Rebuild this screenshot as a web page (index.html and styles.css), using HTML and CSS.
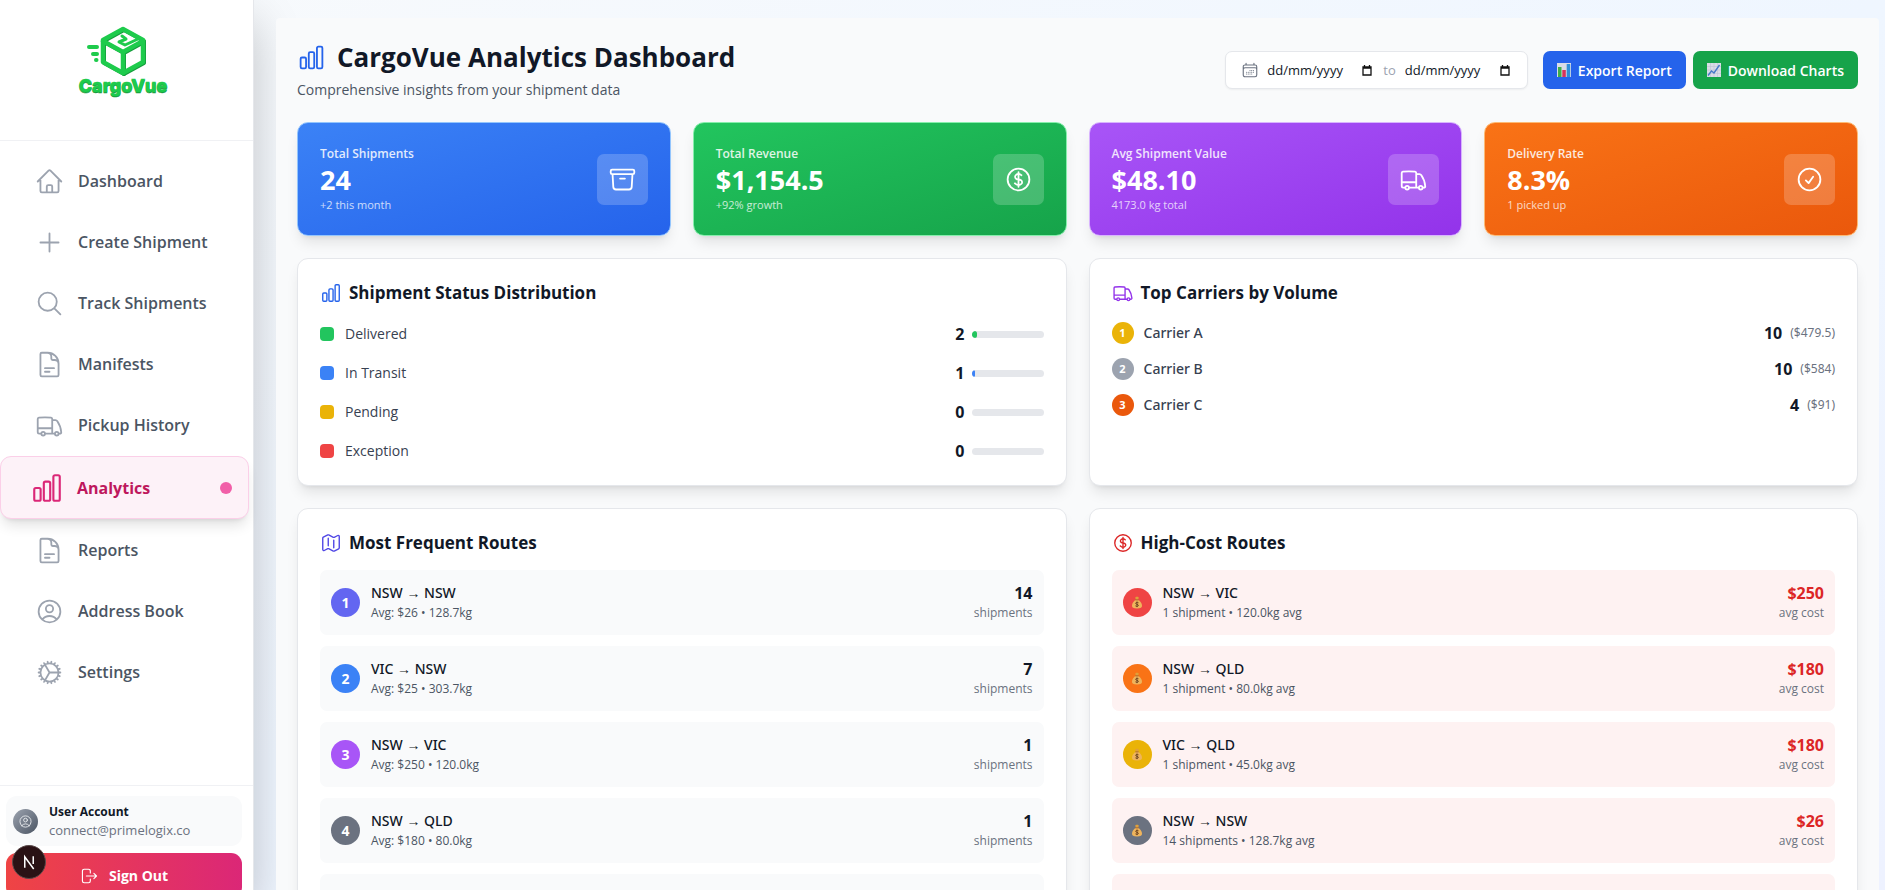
FILE: index.html
```
<!DOCTYPE html>
<html lang="en">
<head>
    <meta charset="UTF-8">
    <meta name="viewport" content="width=device-width, initial-scale=1.0">
    <title>CargoVue Analytics Dashboard</title>
    <link rel="stylesheet" href="styles.css">
</head>
<body>
    <!-- Icon set -->
    <svg class="sprite" aria-hidden="true">
        <symbol id="home" viewBox="0 0 24 24"><path d="m2.25 12 8.954-8.955c.44-.439 1.152-.439 1.591 0L21.75 12M4.5 9.75v10.125c0 .621.504 1.125 1.125 1.125H9.75v-4.875c0-.621.504-1.125 1.125-1.125h2.25c.621 0 1.125.504 1.125 1.125V21h4.125c.621 0 1.125-.504 1.125-1.125V9.75M8.25 21h8.25"/></symbol>
        <symbol id="plus" viewBox="0 0 24 24"><path d="M12 4.5v15m7.5-7.5h-15"/></symbol>
        <symbol id="search" viewBox="0 0 24 24"><path d="m21 21-5.197-5.197m0 0A7.5 7.5 0 1 0 5.196 5.196a7.5 7.5 0 0 0 10.607 10.607Z"/></symbol>
        <symbol id="document" viewBox="0 0 24 24"><path d="M19.5 14.25v-2.625a3.375 3.375 0 0 0-3.375-3.375h-1.5A1.125 1.125 0 0 1 13.5 7.125v-1.5a3.375 3.375 0 0 0-3.375-3.375H8.25m0 12.75h7.5m-7.5 3H12M10.5 2.25H5.625c-.621 0-1.125.504-1.125 1.125v17.25c0 .621.504 1.125 1.125 1.125h12.75c.621 0 1.125-.504 1.125-1.125V11.25a9 9 0 0 0-9-9Z"/></symbol>
        <symbol id="truck" viewBox="0 0 24 24"><path d="M8.25 18.75a1.5 1.5 0 0 1-3 0m3 0a1.5 1.5 0 0 0-3 0m3 0h6m-9 0H3.375a1.125 1.125 0 0 1-1.125-1.125V14.25m17.25 4.5a1.5 1.5 0 0 1-3 0m3 0a1.5 1.5 0 0 0-3 0m3 0h1.125c.621 0 1.129-.504 1.09-1.124a17.902 17.902 0 0 0-3.213-9.193 2.056 2.056 0 0 0-1.58-.86H14.25M16.5 18.75h-2.25m0-11.177v-.958c0-.568-.422-1.048-.987-1.106a48.554 48.554 0 0 0-10.026 0 1.106 1.106 0 0 0-.987 1.106v7.635m12-6.677v6.677m0 4.5v-4.5m0 0h-12"/></symbol>
        <symbol id="chart" viewBox="0 0 24 24"><path d="M3 13.125C3 12.504 3.504 12 4.125 12h2.25c.621 0 1.125.504 1.125 1.125v6.75C7.5 20.496 6.996 21 6.375 21h-2.25A1.125 1.125 0 0 1 3 19.875v-6.75ZM9.75 8.625c0-.621.504-1.125 1.125-1.125h2.25c.621 0 1.125.504 1.125 1.125v11.25c0 .621-.504 1.125-1.125 1.125h-2.25a1.125 1.125 0 0 1-1.125-1.125V8.625ZM16.5 4.125c0-.621.504-1.125 1.125-1.125h2.25C20.496 3 21 3.504 21 4.125v15.75c0 .621-.504 1.125-1.125 1.125h-2.25a1.125 1.125 0 0 1-1.125-1.125V4.125Z"/></symbol>
        <symbol id="user" viewBox="0 0 24 24"><path d="M17.982 18.725A7.488 7.488 0 0 0 12 15.75a7.488 7.488 0 0 0-5.982 2.975m11.963 0a9 9 0 1 0-11.963 0m11.963 0A8.966 8.966 0 0 1 12 21a8.966 8.966 0 0 1-5.982-2.275M15 9.75a3 3 0 1 1-6 0 3 3 0 0 1 6 0Z"/></symbol>
        <symbol id="cog" viewBox="0 0 24 24"><path d="M4.5 12a7.5 7.5 0 0 0 15 0m-15 0a7.5 7.5 0 1 1 15 0m-15 0H3m16.5 0H21m-1.5 0H12m-8.457 3.077 1.41-.513m14.095-5.13 1.41-.513M5.106 17.785l1.15-.964m11.49-9.642 1.149-.964M7.501 19.795l.75-1.3m7.5-12.99.75-1.3m-6.063 16.658.26-1.477m2.605-14.772.26-1.477m0 17.726-.26-1.477M10.698 4.614l-.26-1.477M16.5 19.794l-.75-1.299M7.5 4.205 12 12m6.894 5.785-1.149-.964M6.256 7.178l-1.15-.964m15.352 8.864-1.41-.513M4.954 9.435l-1.41-.514M12.002 12l-3.75 6.495"/></symbol>
        <symbol id="calendar" viewBox="0 0 24 24"><path d="M6.75 3v2.25M17.25 3v2.25M3 18.75V7.5a2.25 2.25 0 0 1 2.25-2.25h13.5A2.25 2.25 0 0 1 21 7.5v11.25m-18 0A2.25 2.25 0 0 0 5.25 21h13.5A2.25 2.25 0 0 0 21 18.75m-18 0v-7.5A2.25 2.25 0 0 1 5.25 9h13.5A2.25 2.25 0 0 1 21 11.25v7.5m-9-6h.008v.008H12v-.008ZM12 15h.008v.008H12V15Zm0 2.25h.008v.008H12v-.008ZM9.75 15h.008v.008H9.75V15Zm0 2.25h.008v.008H9.75v-.008ZM7.5 15h.008v.008H7.5V15Zm0 2.25h.008v.008H7.5v-.008Zm6.75-4.5h.008v.008h-.008v-.008Zm0 2.25h.008v.008h-.008V15Zm0 2.25h.008v.008h-.008v-.008Zm2.25-4.5h.008v.008H16.5v-.008Zm0 2.25h.008v.008H16.5V15Z"/></symbol>
        <symbol id="archive" viewBox="0 0 24 24"><path d="m20.25 7.5-.625 10.632a2.25 2.25 0 0 1-2.247 2.118H6.622a2.25 2.25 0 0 1-2.247-2.118L3.75 7.5M10 11.25h4M3.375 7.5h17.25c.621 0 1.125-.504 1.125-1.125v-1.5c0-.621-.504-1.125-1.125-1.125H3.375c-.621 0-1.125.504-1.125 1.125v1.5c0 .621.504 1.125 1.125 1.125Z"/></symbol>
        <symbol id="dollar" viewBox="0 0 24 24"><path d="M12 6v12m-3-2.818.879.659c1.171.879 3.07.879 4.242 0 1.172-.879 1.172-2.303 0-3.182C13.536 12.219 12.768 12 12 12c-.725 0-1.45-.22-2.003-.659-1.106-.879-1.106-2.303 0-3.182s2.9-.879 4.006 0l.415.33M21 12a9 9 0 1 1-18 0 9 9 0 0 1 18 0Z"/></symbol>
        <symbol id="check" viewBox="0 0 24 24"><path d="M9 12.75 11.25 15 15 9.75M21 12a9 9 0 1 1-18 0 9 9 0 0 1 18 0Z"/></symbol>
        <symbol id="map" viewBox="0 0 24 24"><path d="M9 6.75V15m6-6v8.25m.503 3.498 4.875-2.437c.381-.19.622-.58.622-1.006V4.82c0-.836-.88-1.38-1.628-1.006l-3.869 1.934c-.317.159-.69.159-1.006 0L9.503 3.252a1.125 1.125 0 0 0-1.006 0L3.622 5.689C3.24 5.88 3 6.27 3 6.695V19.18c0 .836.88 1.38 1.628 1.006l3.869-1.934c.317-.159.69-.159 1.006 0l4.994 2.497c.317.158.69.158 1.006 0Z"/></symbol>
        <symbol id="logout" viewBox="0 0 24 24"><path d="M13.750 8V5.250A2.250 2.250 0 0 0 11.500 3h-6a2.250 2.250 0 0 0-2.250 2.250v13.500A2.250 2.250 0 0 0 5.500 21h6a2.250 2.250 0 0 0 2.250-2.250V16M18.500 15.500 22 12l-3.500-3.500M22 12H8.500"/></symbol>
        <symbol id="picker" viewBox="0 0 10 11"><path d="M1 3h8M1 2h8v8H1zM2.500 0v2M7.500 0v2" fill="none" stroke="#111" stroke-width="1.300"/></symbol>
        <symbol id="bars" viewBox="0 0 14 14">
            <rect width="14" height="14" fill="#d8dce6"/>
            <rect x="1" y="4" width="3.500" height="10" fill="#3fae49"/>
            <rect x="5.300" y="7" width="3.500" height="7" fill="#d6335c"/>
            <rect x="9.700" y="1" width="3.500" height="13" fill="#2f8fd8"/>
        </symbol>
        <symbol id="trend" viewBox="0 0 14 14">
            <rect width="14" height="14" fill="#d8dce6"/>
            <path d="M0 3.500h14M0 7h14M0 10.500h14M3.500 0v14M7 0v14M10.500 0v14" stroke="#b9bfd0" stroke-width=".5"/>
            <path d="M1 12.500 4.500 8l2.500 2 5.500-8" fill="none" stroke="#4478c8" stroke-width="1.400"/>
        </symbol>
        <symbol id="bag" viewBox="0 0 12 14">
            <path d="M4 1.500 6 .5l2 1L7.200 4H4.800z" fill="#e0a03a"/>
            <path d="M4.600 4h2.800c2.300 1.500 4 4 4 6.500 0 2-1.400 3-5.400 3s-5.400-1-5.400-3C.6 8 2.300 5.500 4.600 4z" fill="#efb45c"/>
            <path d="M4.200 4.200h3.600" stroke="#a5602a" stroke-width="1"/>
            <path d="M7.600 7.300C6.500 6.600 4.500 6.700 4.600 8c.1 1.200 2.900.8 2.900 2 0 1.400-2.200 1.400-3.200.6M6 6v6" fill="none" stroke="#69401f" stroke-width="1"/>
        </symbol>
    </svg>

    <div class="app">
        <aside class="sidebar">
            <div class="brand">
                <svg class="logo" viewBox="0 0 92 76" role="img" aria-label="CargoVue">
                    <g fill="none" stroke="#159a3c" stroke-linejoin="round" stroke-linecap="round" stroke-width="4" transform="translate(1 1)">
                        <path d="M45 5 65 16v22L45 49 25 38V16Z"/>
                        <path d="m25 17 20 11 20-11M45 28v21"/>
                    </g>
                    <g fill="none" stroke="#1ecb4c" stroke-linejoin="round" stroke-linecap="round">
                        <path d="M45 5 65 16v22L45 49 25 38V16Z" stroke-width="4.500"/>
                        <path d="m25 17 20 11 20-11M45 28v21" stroke-width="4.500"/>
                        <path d="m60 15-13 6-6-3 7-3-4-3" stroke-width="3"/>
                        <path d="M11 23h8M15 30h4M18 36h.5" stroke-width="4"/>
                    </g>
                    <text x="45" y="69" class="logo-shade">CargoVue</text>
                    <text x="45" y="68" class="logo-text">CargoVue</text>
                </svg>
            </div>

            <nav class="nav">
                <a href="#" class="nav-link"><svg class="icon"><use href="#home"/></svg>Dashboard</a>
                <a href="#" class="nav-link"><svg class="icon"><use href="#plus"/></svg>Create Shipment</a>
                <a href="#" class="nav-link"><svg class="icon"><use href="#search"/></svg>Track Shipments</a>
                <a href="#" class="nav-link"><svg class="icon"><use href="#document"/></svg>Manifests</a>
                <a href="#" class="nav-link"><svg class="icon"><use href="#truck"/></svg>Pickup History</a>
                <a href="#" class="nav-link active"><svg class="icon"><use href="#chart"/></svg>Analytics<span class="dot"></span></a>
                <a href="#" class="nav-link"><svg class="icon"><use href="#document"/></svg>Reports</a>
                <a href="#" class="nav-link"><svg class="icon"><use href="#user"/></svg>Address Book</a>
                <a href="#" class="nav-link"><svg class="icon"><use href="#cog"/></svg>Settings</a>
            </nav>

            <div class="account">
                <div class="user-card">
                    <span class="avatar"><svg class="icon"><use href="#user"/></svg></span>
                    <div class="user-info">
                        <p class="user-name">User Account</p>
                        <p class="user-mail">connect@primelogix.co</p>
                    </div>
                </div>
                <button type="button" class="sign-out"><svg class="icon"><use href="#logout"/></svg>Sign Out</button>
                <button type="button" class="dev-badge" aria-label="Dev tools">
                    <svg viewBox="0 0 34 34"><path d="M12.500 23V11.500L22 24.500M21.500 11v8" fill="none" stroke="#fff" stroke-width="1.600"/></svg>
                </button>
            </div>
        </aside>

        <main class="main">
            <div class="content">
                <header class="page-header">
                    <div>
                        <h1 class="page-title"><svg class="icon"><use href="#chart"/></svg>CargoVue Analytics Dashboard</h1>
                        <p class="subtitle">Comprehensive insights from your shipment data</p>
                    </div>
                    <div class="actions">
                        <div class="date-range">
                            <svg class="icon"><use href="#calendar"/></svg>
                            <input type="text" class="date-input" placeholder="dd/mm/yyyy" aria-label="Start date">
                            <svg class="picker"><use href="#picker"/></svg>
                            <span class="to">to</span>
                            <input type="text" class="date-input" placeholder="dd/mm/yyyy" aria-label="End date">
                            <svg class="picker"><use href="#picker"/></svg>
                        </div>
                        <div class="buttons">
                            <button type="button" class="btn btn-blue"><svg class="emoji"><use href="#bars"/></svg>Export Report</button>
                            <button type="button" class="btn btn-green"><svg class="emoji"><use href="#trend"/></svg>Download Charts</button>
                        </div>
                    </div>
                </header>

                <!-- Key metrics -->
                <section class="stats">
                    <div class="stat blue">
                        <div>
                            <p class="stat-label">Total Shipments</p>
                            <p class="stat-value">24</p>
                            <p class="stat-note">+2 this month</p>
                        </div>
                        <span class="stat-icon"><svg class="icon"><use href="#archive"/></svg></span>
                    </div>
                    <div class="stat green">
                        <div>
                            <p class="stat-label">Total Revenue</p>
                            <p class="stat-value">$1,154.5</p>
                            <p class="stat-note">+92% growth</p>
                        </div>
                        <span class="stat-icon"><svg class="icon"><use href="#dollar"/></svg></span>
                    </div>
                    <div class="stat purple">
                        <div>
                            <p class="stat-label">Avg Shipment Value</p>
                            <p class="stat-value">$48.10</p>
                            <p class="stat-note">4173.0 kg total</p>
                        </div>
                        <span class="stat-icon"><svg class="icon"><use href="#truck"/></svg></span>
                    </div>
                    <div class="stat orange">
                        <div>
                            <p class="stat-label">Delivery Rate</p>
                            <p class="stat-value">8.3%</p>
                            <p class="stat-note">1 picked up</p>
                        </div>
                        <span class="stat-icon"><svg class="icon"><use href="#check"/></svg></span>
                    </div>
                </section>

                <section class="panels">
                    <div class="panel">
                        <h2 class="panel-title"><svg class="icon c-blue"><use href="#chart"/></svg>Shipment Status Distribution</h2>
                        <ul class="status-list">
                            <li class="status"><span class="swatch bg-green"></span>Delivered<b class="count">2</b><span class="track"><span class="fill bg-green" style="width: 8.3%"></span></span></li>
                            <li class="status"><span class="swatch bg-blue"></span>In Transit<b class="count">1</b><span class="track"><span class="fill bg-blue" style="width: 4.2%"></span></span></li>
                            <li class="status"><span class="swatch bg-yellow"></span>Pending<b class="count">0</b><span class="track"></span></li>
                            <li class="status"><span class="swatch bg-red"></span>Exception<b class="count">0</b><span class="track"></span></li>
                        </ul>
                    </div>

                    <div class="panel">
                        <h2 class="panel-title"><svg class="icon c-purple"><use href="#truck"/></svg>Top Carriers by Volume</h2>
                        <ul class="carrier-list">
                            <li class="carrier"><span class="rank bg-yellow">1</span>Carrier A<b class="count">10</b><span class="cost">($479.5)</span></li>
                            <li class="carrier"><span class="rank bg-gray">2</span>Carrier B<b class="count">10</b><span class="cost">($584)</span></li>
                            <li class="carrier"><span class="rank bg-rust">3</span>Carrier C<b class="count">4</b><span class="cost">($91)</span></li>
                        </ul>
                    </div>

                    <div class="panel">
                        <h2 class="panel-title"><svg class="icon c-indigo"><use href="#map"/></svg>Most Frequent Routes</h2>
                        <ul class="route-list">
                            <li class="route">
                                <span class="badge bg-indigo">1</span>
                                <div class="route-info"><p class="route-name">NSW → NSW</p><p class="route-note">Avg: $26 • 128.7kg</p></div>
                                <div class="route-total"><p class="amount">14</p><p class="unit">shipments</p></div>
                            </li>
                            <li class="route">
                                <span class="badge bg-blue">2</span>
                                <div class="route-info"><p class="route-name">VIC → NSW</p><p class="route-note">Avg: $25 • 303.7kg</p></div>
                                <div class="route-total"><p class="amount">7</p><p class="unit">shipments</p></div>
                            </li>
                            <li class="route">
                                <span class="badge bg-purple">3</span>
                                <div class="route-info"><p class="route-name">NSW → VIC</p><p class="route-note">Avg: $250 • 120.0kg</p></div>
                                <div class="route-total"><p class="amount">1</p><p class="unit">shipments</p></div>
                            </li>
                            <li class="route">
                                <span class="badge bg-slate">4</span>
                                <div class="route-info"><p class="route-name">NSW → QLD</p><p class="route-note">Avg: $180 • 80.0kg</p></div>
                                <div class="route-total"><p class="amount">1</p><p class="unit">shipments</p></div>
                            </li>
                            <li class="route"></li>
                        </ul>
                    </div>

                    <div class="panel">
                        <h2 class="panel-title"><svg class="icon c-red"><use href="#dollar"/></svg>High-Cost Routes</h2>
                        <ul class="route-list costly">
                            <li class="route">
                                <span class="badge bg-red"><svg class="bag"><use href="#bag"/></svg></span>
                                <div class="route-info"><p class="route-name">NSW → VIC</p><p class="route-note">1 shipment • 120.0kg avg</p></div>
                                <div class="route-total"><p class="amount">$250</p><p class="unit">avg cost</p></div>
                            </li>
                            <li class="route">
                                <span class="badge bg-orange"><svg class="bag"><use href="#bag"/></svg></span>
                                <div class="route-info"><p class="route-name">NSW → QLD</p><p class="route-note">1 shipment • 80.0kg avg</p></div>
                                <div class="route-total"><p class="amount">$180</p><p class="unit">avg cost</p></div>
                            </li>
                            <li class="route">
                                <span class="badge bg-yellow"><svg class="bag"><use href="#bag"/></svg></span>
                                <div class="route-info"><p class="route-name">VIC → QLD</p><p class="route-note">1 shipment • 45.0kg avg</p></div>
                                <div class="route-total"><p class="amount">$180</p><p class="unit">avg cost</p></div>
                            </li>
                            <li class="route">
                                <span class="badge bg-slate"><svg class="bag"><use href="#bag"/></svg></span>
                                <div class="route-info"><p class="route-name">NSW → NSW</p><p class="route-note">14 shipments • 128.7kg avg</p></div>
                                <div class="route-total"><p class="amount">$26</p><p class="unit">avg cost</p></div>
                            </li>
                            <li class="route"></li>
                        </ul>
                    </div>
                </section>
            </div>
        </main>
    </div>
</body>
</html>
```
FILE: styles.css
```
* {
    box-sizing: border-box;
}

body {
    margin: 0;
    font-family: "Open Sans", "Noto Sans", sans-serif;
    font-size: 14px;
    line-height: 20px;
    color: #111827;
}

h1, h2, p, ul {
    margin: 0;
    padding: 0;
}

ul {
    list-style: none;
}

button, input {
    font-family: inherit;
}

.sprite {
    display: none;
}

.icon {
    width: 22px;
    height: 22px;
    flex-shrink: 0;
    fill: none;
    stroke: currentColor;
    stroke-width: 1.5;
    stroke-linecap: round;
    stroke-linejoin: round;
}

.app {
    display: flex;
    height: 100vh;
    overflow: hidden;
    background: linear-gradient(to bottom right, #f8fafc, #eff6ff 50%, #eef2ff);
}

/* Sidebar */
.sidebar {
    display: flex;
    flex-direction: column;
    flex: 0 0 254px;
    background: #fff;
    border-right: 1px solid #e5e7eb;
    box-shadow: 0 22px 45px rgba(0, 0, 0, 0.22);
}

.brand {
    display: flex;
    justify-content: center;
    flex: 0 0 141px;
    padding: 24px 6px 0 0;
    border-bottom: 1px solid #f0f1f4;
}

.logo {
    width: 92px;
    height: 76px;
}

.logo-text, .logo-shade {
    font-family: Inter, sans-serif;
    font-size: 18px;
    font-weight: 800;
    text-anchor: middle;
    fill: #1ecb4c;
    stroke: #1ecb4c;
    stroke-width: 0.5;
}

.logo-shade {
    fill: #15983c;
    stroke: #15983c;
}

.nav {
    display: flex;
    flex-direction: column;
    flex: 1 0 auto;
    gap: 7px;
    padding: 13px 4px 86px 0;
}

.nav-link {
    display: flex;
    align-items: center;
    gap: 14px;
    height: 54px;
    padding: 0 16px 0 35px;
    border-radius: 11px;
    color: #4b5563;
    font-size: 16px;
    font-weight: 600;
    text-decoration: none;
}

.nav-link .icon {
    width: 29px;
    height: 29px;
    color: #9ca3af;
}

.nav-link.active {
    gap: 13px;
    height: 63px;
    margin: -3px 0;
    padding-left: 29px;
    background: #fdf2f8;
    border: 1px solid #fbcfe8;
    color: #be185d;
    font-weight: 700;
    box-shadow: 0 9px 14px -3px rgba(0, 0, 0, 0.12), 0 4px 5px -4px rgba(0, 0, 0, 0.12);
}

.nav-link.active .icon {
    width: 34px;
    height: 34px;
    color: #db2777;
}

.dot {
    width: 12px;
    height: 12px;
    margin-left: auto;
    border-radius: 50%;
    background: #f15fa8;
}

.account {
    position: relative;
    display: flex;
    flex-direction: column;
    flex-shrink: 0;
    gap: 7px;
    padding: 10px 11px 12px 6px;
    border-top: 1px solid #f0f1f4;
}

.user-card {
    display: flex;
    align-items: center;
    gap: 11px;
    height: 50px;
    padding: 0 7px;
    border-radius: 11px;
    background: #f9fafb;
}

.avatar {
    display: flex;
    align-items: center;
    justify-content: center;
    width: 25px;
    height: 25px;
    border-radius: 50%;
    background: linear-gradient(135deg, #9ca3af, #4b5563);
    color: #e5e7eb;
}

.avatar .icon {
    width: 15px;
    height: 15px;
}

.user-info {
    font-size: 13px;
    line-height: 18px;
}

.user-name {
    font-size: 12px;
    font-weight: 700;
}

.user-mail {
    color: #6b7280;
}

.sign-out {
    display: flex;
    align-items: center;
    justify-content: center;
    gap: 11px;
    height: 45px;
    border: 0;
    border-radius: 11px;
    background: linear-gradient(90deg, #ef4444, #db2777);
    color: #fff;
    font-size: 14px;
    font-weight: 700;
}

.sign-out .icon {
    width: 18px;
    height: 18px;
}

.dev-badge {
    position: absolute;
    top: 59px;
    left: 12px;
    width: 34px;
    height: 34px;
    padding: 0;
    border: 1px solid #5a4a4a;
    border-radius: 50%;
    background: #2a1215;
}

.dev-badge svg {
    display: block;
}

/* Main area */
.main {
    flex: 1;
    min-width: 0;
    padding: 18px 6px 0 22px;
}

.content {
    padding: 22px 21px;
    border-radius: 4px;
    background: #f9fafb;
}

.page-header {
    display: flex;
    align-items: center;
    justify-content: space-between;
    height: 60px;
    margin-bottom: 22px;
}

.page-title {
    display: flex;
    align-items: center;
    gap: 11px;
    font-size: 26px;
    line-height: 34px;
    font-weight: 700;
}

.page-title .icon {
    width: 29px;
    height: 29px;
    color: #2563eb;
}

.subtitle {
    margin-top: 6px;
    color: #4b5563;
}

.actions {
    display: flex;
    gap: 15px;
}

.buttons {
    display: flex;
    gap: 7px;
}

.date-range {
    display: flex;
    align-items: center;
    height: 38px;
    padding: 0 17px 0 15px;
    border: 1px solid #e5e7eb;
    border-radius: 7px;
    background: #fff;
    box-shadow: 0 1px 2px rgba(0, 0, 0, 0.05);
    color: #6b7280;
}

.date-range .icon {
    width: 18px;
    height: 18px;
    margin-right: 8px;
}

.date-input {
    width: 95px;
    padding: 0;
    border: 0;
    background: none;
    font-size: 13px;
    color: #111827;
}

.date-input::placeholder {
    color: #111827;
}

.picker {
    width: 10px;
    height: 11px;
}

.to {
    margin: 0 9px 0 11px;
    color: #9ca3af;
    font-size: 13px;
}

.btn {
    display: flex;
    align-items: center;
    gap: 7px;
    height: 38px;
    padding: 0 14px;
    border: 0;
    border-radius: 7px;
    color: #fff;
    font-size: 14px;
    font-weight: 600;
}

.btn-blue {
    background: #2563eb;
}

.btn-green {
    background: #16a34a;
}

.emoji {
    width: 14px;
    height: 14px;
}

/* Metric cards */
.stats {
    display: grid;
    grid-template-columns: repeat(4, 1fr);
    gap: 22px;
    margin-bottom: 22px;
}

.stat {
    display: flex;
    align-items: center;
    justify-content: space-between;
    height: 114px;
    padding: 0 22px;
    border: 1px solid;
    border-radius: 11px;
    color: #fff;
    box-shadow: 0 9px 14px -3px rgba(0, 0, 0, 0.1), 0 4px 5px -4px rgba(0, 0, 0, 0.1);
}

.stat-label {
    font-size: 12px;
    line-height: 18px;
    font-weight: 600;
    opacity: 0.85;
}

.stat-value {
    font-size: 27px;
    line-height: 34px;
    font-weight: 700;
}

.stat-note {
    font-size: 11px;
    line-height: 16px;
    opacity: 0.75;
}

.stat-icon {
    display: flex;
    padding: 11px;
    border-radius: 7px;
    background: rgba(255, 255, 255, 0.2);
}

.stat-icon .icon {
    width: 29px;
    height: 29px;
}

.blue {
    background: linear-gradient(to bottom right, #3b82f6, #2563eb);
    border-color: #93c5fd;
}

.green {
    background: linear-gradient(to bottom right, #22c55e, #16a34a);
    border-color: #86efac;
}

.purple {
    background: linear-gradient(to bottom right, #a855f7, #9333ea);
    border-color: #d8b4fe;
}

.orange {
    background: linear-gradient(to bottom right, #f97316, #ea580c);
    border-color: #fdba74;
}

/* Panels */
.panels {
    display: grid;
    grid-template-columns: repeat(2, 1fr);
    gap: 22px;
}

.panel {
    padding: 21px 22px 20px;
    border: 1px solid #e5e7eb;
    border-radius: 11px;
    background: #fff;
    box-shadow: 0 9px 14px -3px rgba(0, 0, 0, 0.1), 0 4px 5px -4px rgba(0, 0, 0, 0.1);
}

.panel-title {
    display: flex;
    align-items: center;
    gap: 7px;
    margin-bottom: 14px;
    font-size: 17px;
    line-height: 26px;
    font-weight: 700;
}

.status-list {
    display: grid;
    gap: 11px;
}

.status {
    display: flex;
    align-items: center;
    height: 28px;
    color: #374151;
}

.swatch {
    width: 14px;
    height: 14px;
    margin-right: 11px;
    border-radius: 4px;
}

.count {
    margin-left: auto;
    color: #111827;
    font-size: 16px;
}

.track {
    width: 72px;
    height: 7px;
    margin-left: 7px;
    border-radius: 4px;
    background: #e5e7eb;
    overflow: hidden;
}

.fill {
    display: block;
    height: 7px;
    border-radius: 4px;
}

.carrier-list {
    display: grid;
    gap: 11px;
}

.carrier {
    display: flex;
    align-items: center;
    height: 25px;
    color: #374151;
    font-family: "Noto Sans", sans-serif;
    font-weight: 500;
}

.rank {
    width: 22px;
    margin-right: 10px;
    border-radius: 50%;
    color: #fff;
    font-size: 11px;
    line-height: 22px;
    font-weight: 700;
    text-align: center;
}

.cost {
    margin-left: 8px;
    color: #6b7280;
    font-size: 12px;
    font-weight: 400;
}

.route-list {
    display: grid;
    gap: 11px;
}

.route {
    display: flex;
    align-items: center;
    gap: 11px;
    height: 65px;
    padding: 0 11px;
    border-radius: 7px;
    background: #f9fafb;
}

.costly .route {
    background: #fef2f2;
}

.badge {
    display: flex;
    align-items: center;
    justify-content: center;
    width: 29px;
    height: 29px;
    border-radius: 50%;
    color: #fff;
    font-weight: 700;
}

.bag {
    width: 12px;
    height: 13px;
}

.route-name {
    font-family: "Noto Sans", sans-serif;
    font-weight: 500;
}

.route-note, .unit {
    font-size: 12px;
    color: #4b5563;
}

.unit {
    color: #6b7280;
}

.route-total {
    margin-left: auto;
    text-align: right;
}

.amount {
    font-size: 16px;
    font-weight: 700;
}

.costly .amount {
    color: #dc2626;
}

.c-blue { color: #2563eb; }
.c-purple { color: #9333ea; }
.c-indigo { color: #4f46e5; }
.c-red { color: #dc2626; }

.bg-green { background: #22c55e; }
.bg-blue { background: #3b82f6; }
.bg-yellow { background: #eab308; }
.bg-red { background: #ef4444; }
.bg-gray { background: #9ca3af; }
.bg-rust { background: #ea580c; }
.bg-indigo { background: #6366f1; }
.bg-purple { background: #a855f7; }
.bg-slate { background: #6b7280; }
.bg-orange { background: #f97316; }
```
